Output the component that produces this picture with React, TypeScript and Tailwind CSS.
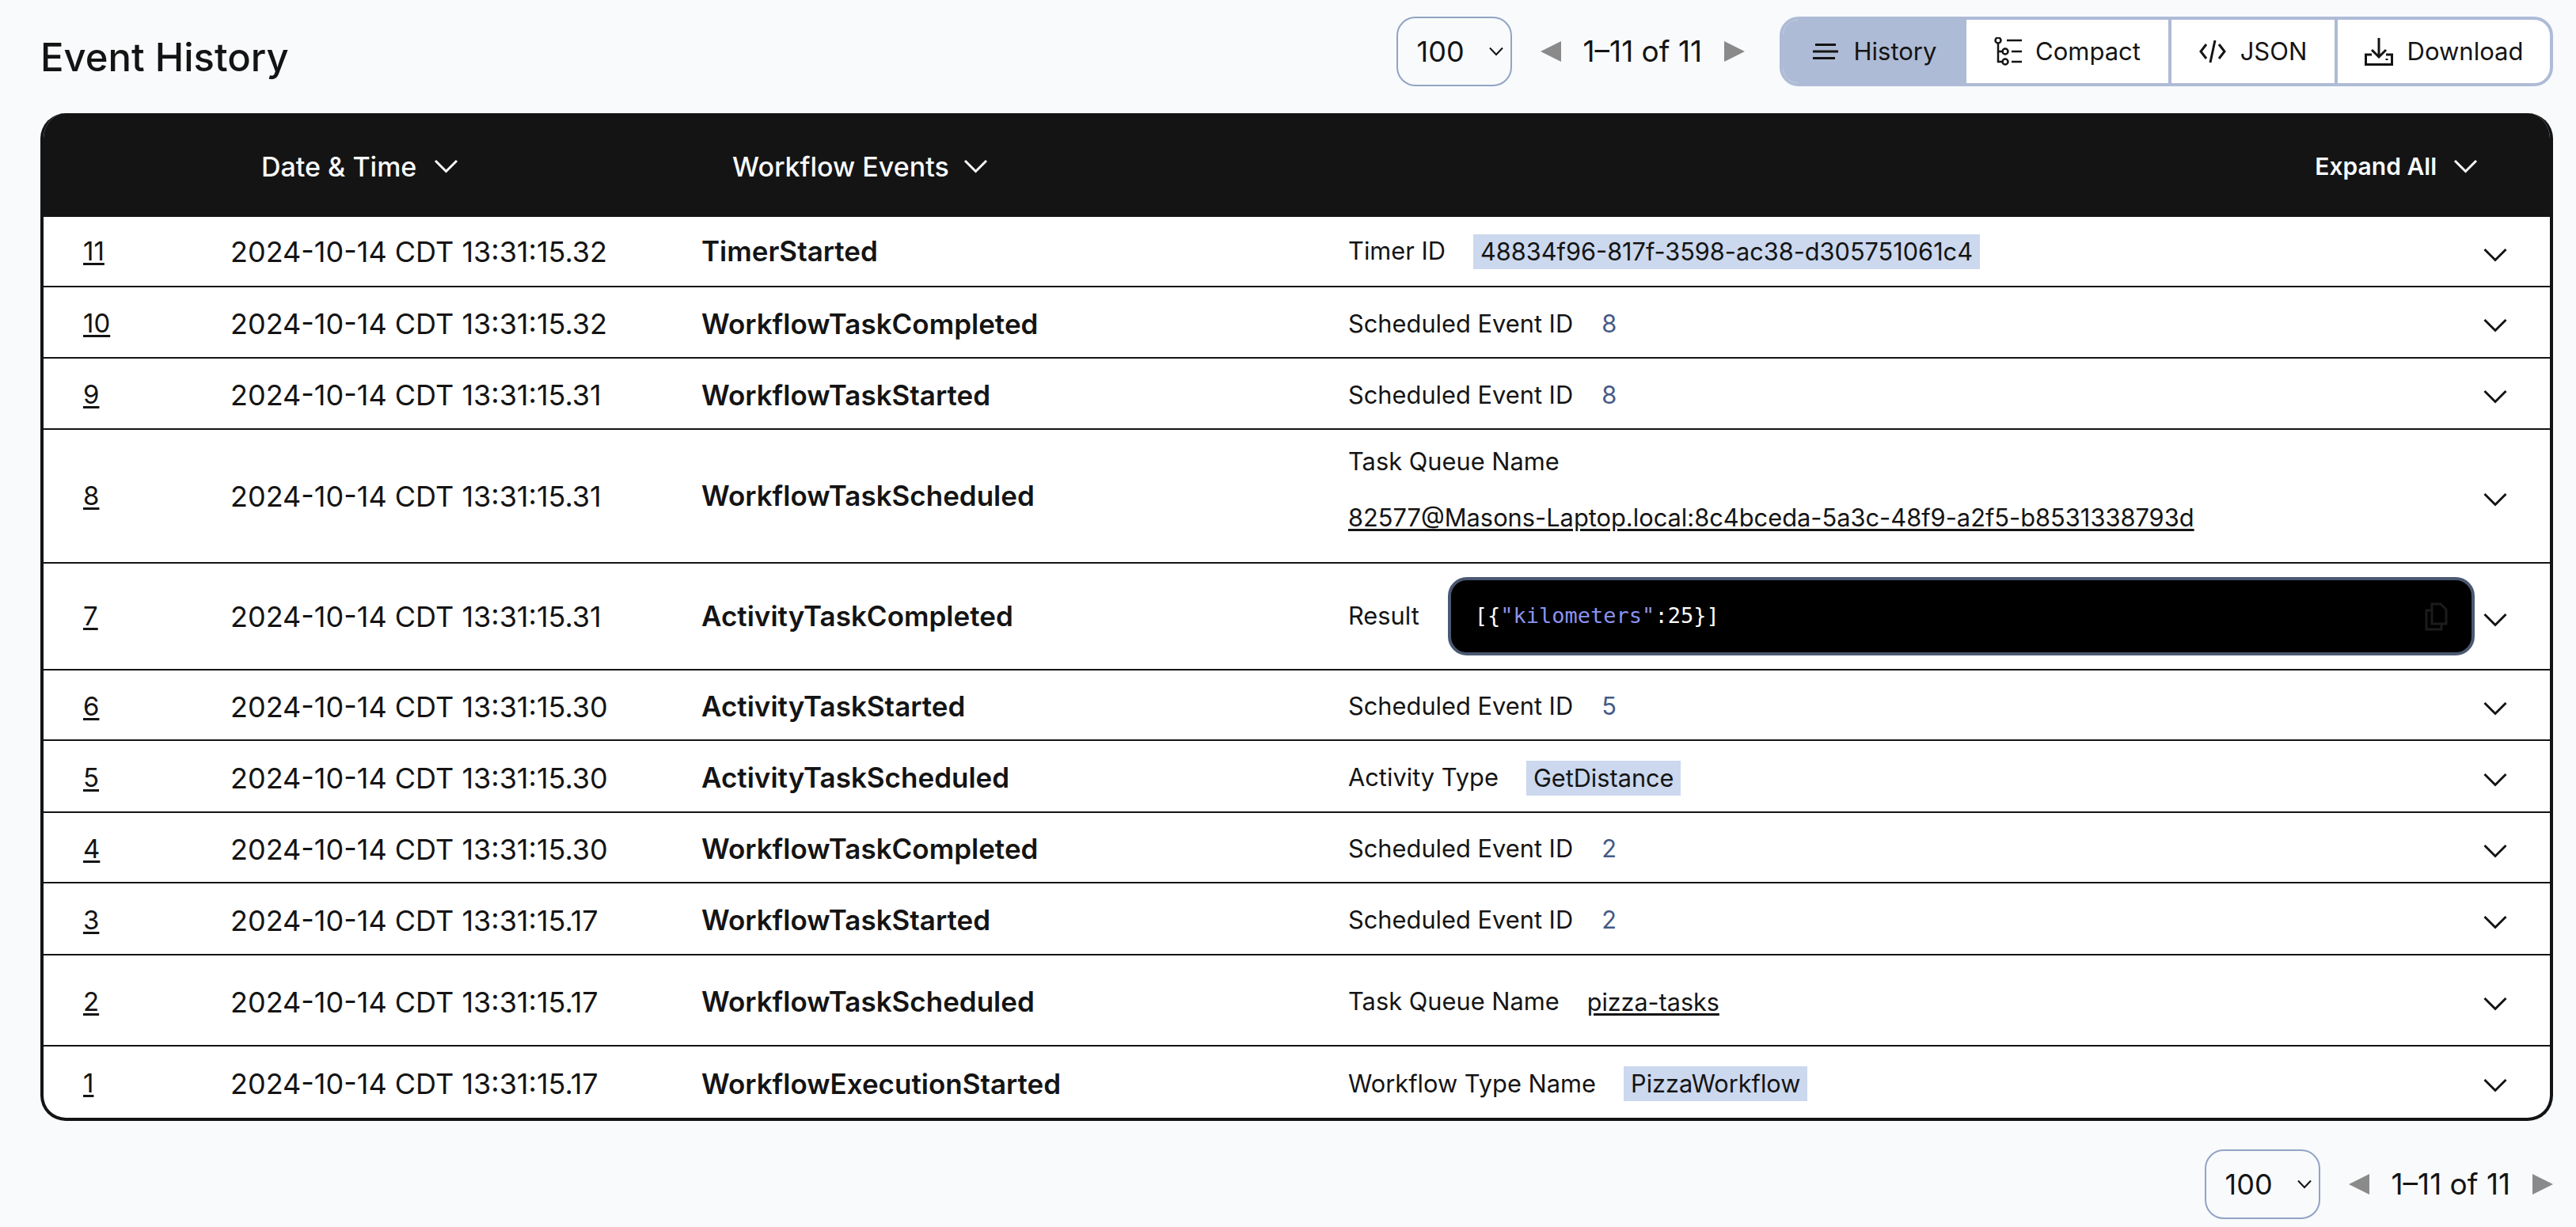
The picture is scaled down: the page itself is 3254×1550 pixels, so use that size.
import type { ReactNode } from "react";

const font = { fontFamily: "Inter, sans-serif" };

type EventRow = {
  id: number;
  time: string;
  name: string;
  height: string;
  chevronGap: string;
  detail: ReactNode;
};

function Chevron({ className = "" }: { className?: string }) {
  return (
    <svg viewBox="0 0 30 18" fill="none" stroke="currentColor" strokeWidth="3" className={className}>
      <path d="M1.5 2 15 15.5 28.500 2" />
    </svg>
  );
}

function Label({ children }: { children: ReactNode }) {
  return <span className="text-[30.8px] text-[#141414]">{children}</span>;
}

function Num({ label, value }: { label: string; value: string }) {
  return (
    <div className="flex items-center gap-[36px]">
      <Label>{label}</Label>
      <span className="text-[30.8px] text-[#465a85]">{value}</span>
    </div>
  );
}

function Badge({ label, value }: { label: string; value: string }) {
  return (
    <div className="flex items-center gap-[35px]">
      <Label>{label}</Label>
      <span className="bg-[#cbd8ee] px-[9px] text-[30.7px] leading-[44px] text-[#141414]">{value}</span>
    </div>
  );
}

const rows: EventRow[] = [
  { id: 11, time: "2024-10-14 CDT 13:31:15.32", name: "TimerStarted", height: "h-[89px]", chevronGap: "mt-[8px]", detail: <Badge label="Timer ID" value="48834f96-817f-3598-ac38-d305751061c4" /> },
  { id: 10, time: "2024-10-14 CDT 13:31:15.32", name: "WorkflowTaskCompleted", height: "h-[90px] pt-[4px]", chevronGap: "mt-[4px]", detail: <Num label="Scheduled Event ID" value="8" /> },
  { id: 9, time: "2024-10-14 CDT 13:31:15.31", name: "WorkflowTaskStarted", height: "h-[90px] pt-[4px]", chevronGap: "mt-[4px]", detail: <Num label="Scheduled Event ID" value="8" /> },
  {
    id: 8,
    time: "2024-10-14 CDT 13:31:15.31",
    name: "WorkflowTaskScheduled",
    height: "h-[169px]",
    chevronGap: "mt-[8px]",
    detail: (
      <div className="flex flex-col gap-[26px] pb-[18px]">
        <Label>Task Queue Name</Label>
        <a className="text-[30.8px] leading-[42px] text-[#141414] underline decoration-[3px] underline-offset-[3px]">82577@Masons-Laptop.local:8c4bceda-5a3c-48f9-a2f5-b8531338793d</a>
      </div>
    ),
  },
  {
    id: 7,
    time: "2024-10-14 CDT 13:31:15.31",
    name: "ActivityTaskCompleted",
    height: "h-[135px]",
    chevronGap: "mt-[8px]",
    detail: (
      <div className="flex w-full items-center gap-[36px]">
        <Label>Result</Label>
        <div className="flex h-[99px] flex-1 items-center justify-between rounded-[24px] border-4 border-[#4a5872] bg-black pl-[30px] pr-[30px]">
          <code className="text-[27px] text-white" style={{ fontFamily: '"DejaVu Sans Mono", monospace' }}>
            {"[{"}<span className="text-[#8b93ef]">"kilometers"</span>{":25}]"}
          </code>
          <svg viewBox="0 0 30 36" fill="none" stroke="#1c1c1c" strokeWidth="3" className="h-[36px] w-[30px]">
            <path d="M10 2h11l7 7v18H10z" />
            <path d="M10 10H3v24h19v-7" />
          </svg>
        </div>
      </div>
    ),
  },
  { id: 6, time: "2024-10-14 CDT 13:31:15.30", name: "ActivityTaskStarted", height: "h-[89px] pt-[4px]", chevronGap: "mt-[4px]", detail: <Num label="Scheduled Event ID" value="5" /> },
  { id: 5, time: "2024-10-14 CDT 13:31:15.30", name: "ActivityTaskScheduled", height: "h-[91px] pt-[4px]", chevronGap: "mt-[4px]", detail: <Badge label="Activity Type" value="GetDistance" /> },
  { id: 4, time: "2024-10-14 CDT 13:31:15.30", name: "WorkflowTaskCompleted", height: "h-[89px] pt-[4px]", chevronGap: "mt-[4px]", detail: <Num label="Scheduled Event ID" value="2" /> },
  { id: 3, time: "2024-10-14 CDT 13:31:15.17", name: "WorkflowTaskStarted", height: "h-[91px] pt-[4px]", chevronGap: "mt-[4px]", detail: <Num label="Scheduled Event ID" value="2" /> },
  {
    id: 2,
    time: "2024-10-14 CDT 13:31:15.17",
    name: "WorkflowTaskScheduled",
    height: "h-[115px] pt-[4px]",
    chevronGap: "mt-[4px]",
    detail: (
      <div className="flex items-center gap-[35px]">
        <Label>Task Queue Name</Label>
        <a className="text-[30.5px] text-[#141414] underline decoration-[3px] underline-offset-[3px]">pizza-tasks</a>
      </div>
    ),
  },
  { id: 1, time: "2024-10-14 CDT 13:31:15.17", name: "WorkflowExecutionStarted", height: "h-[90px] pt-[4px]", chevronGap: "mt-[4px]", detail: <Badge label="Workflow Type Name" value="PizzaWorkflow" /> },
];

function Pager() {
  return (
    <div className="flex items-center">
      <div className="flex h-[88px] w-[146px] items-center justify-between rounded-[24px] border-2 border-[#92a4c3] pl-[24px] pr-[9px]">
        <span className="text-[36px] text-[#141414]">100</span>
        <svg viewBox="0 0 18 12" fill="none" stroke="#141414" strokeWidth="2" className="h-[12px] w-[18px]">
          <path d="M1 1.500 9 10 17 1.500" />
        </svg>
      </div>
      <div className="ml-[36px] h-0 w-0 border-y-[13px] border-r-[26px] border-y-transparent border-r-[#8a8a8a]" />
      <span className="mx-[28px] text-[37px] text-[#141414]">1–11 of 11</span>
      <div className="h-0 w-0 border-y-[13px] border-l-[26px] border-y-transparent border-l-[#8a8a8a]" />
    </div>
  );
}

function ViewTabs() {
  return (
    <div className="flex h-[88px] w-[977px] overflow-hidden rounded-[24px] border-4 border-[#aebbd6] bg-white text-[31px] text-[#141414]">
      <div className="flex w-[232px] items-center justify-center gap-[20px] bg-[#aebbd6]">
        <svg viewBox="0 0 32 22" fill="none" stroke="#141414" strokeWidth="3" className="h-[22px] w-[32px]">
          <path d="M3 2.500h26M0 11h32M0 19.500h28" />
        </svg>
        History
      </div>
      <div className="flex w-[255px] items-center justify-center gap-[16px]">
        <svg viewBox="0 0 36 36" fill="none" stroke="#141414" strokeWidth="2.500" className="h-[36px] w-[36px]">
          <circle cx="5" cy="4" r="3.500" />
          <circle cx="14" cy="18" r="3.500" />
          <circle cx="14" cy="31" r="3.500" />
          <path d="M5 8v23h6M5 18h5M16 4h19M22 18h13M22 31h13" />
        </svg>
        Compact
      </div>
      <div className="flex w-[210px] items-center justify-center gap-[18px] border-l-4 border-[#aebbd6]">
        <svg viewBox="0 0 34 30" fill="none" stroke="#141414" strokeWidth="3" className="h-[30px] w-[34px]">
          <path d="M9 6 2 15l7 9M25 6l7 9-7 9M20 1l-6 28" />
        </svg>
        JSON
      </div>
      <div className="flex flex-1 items-center justify-center gap-[18px] border-l-4 border-[#aebbd6]">
        <svg viewBox="0 0 36 36" fill="none" stroke="#141414" strokeWidth="3" className="h-[36px] w-[36px]">
          <path d="M18 1v24M9 16l9 9 9-9" />
          <path d="M9 22H1.500v12.500h33V22H27" />
          <path d="M28 27v2" />
        </svg>
        Download
      </div>
    </div>
  );
}

export default function App() {
  return (
    <div className="min-h-[1550px] overflow-hidden bg-[#f8fafc] pl-[51px] pr-[29px] pt-[21px]" style={font}>
      <header className="flex h-[88px] items-center justify-between">
        <h1 className="pt-[15px] text-[49px] font-medium text-[#141414]">Event History</h1>
        <div className="flex items-center gap-[44px]">
          <Pager />
          <ViewTabs />
        </div>
      </header>

      <section className="mt-[34px] overflow-hidden rounded-[32px] border-x-4 border-b-4 border-[#141414] bg-white">
        <div className="-mx-1 flex h-[131px] items-center bg-[#141414] pt-[3px] text-[34px] font-medium text-[#f8fafc]">
          <div className="ml-[279px] flex w-[595px] items-center gap-[22px]">
            Date & Time <Chevron className="h-[18px] w-[31px]" />
          </div>
          <div className="flex flex-1 items-center gap-[18px]">
            Workflow Events <Chevron className="h-[18px] w-[31px]" />
          </div>
          <div className="mr-[95px] flex items-center gap-[21px] text-[30px] font-semibold">
            Expand All <Chevron className="h-[18px] w-[31px]" />
          </div>
        </div>
        {rows.map((row, index) => (
          <div
            key={row.id}
            className={`flex items-center text-[36px] text-[#141414] ${row.height} ${index < rows.length - 1 ? "border-b-2 border-[#141414]" : ""}`}
          >
            <a className="w-[236px] pl-[50px] text-[33px] underline decoration-[3px] underline-offset-[3px]">{row.id}</a>
            <div className="w-[595px]">{row.time}</div>
            <div className="w-[817px] text-[35px] font-semibold">{row.name}</div>
            <div className="flex min-w-0 flex-1 items-center">{row.detail}</div>
            <Chevron className={`ml-[11px] mr-[54px] h-[18px] w-[30px] shrink-0 ${row.chevronGap}`} />
          </div>
        ))}
      </section>

      <footer className="mt-[36px] flex justify-end">
        <Pager />
      </footer>
    </div>
  );
}
